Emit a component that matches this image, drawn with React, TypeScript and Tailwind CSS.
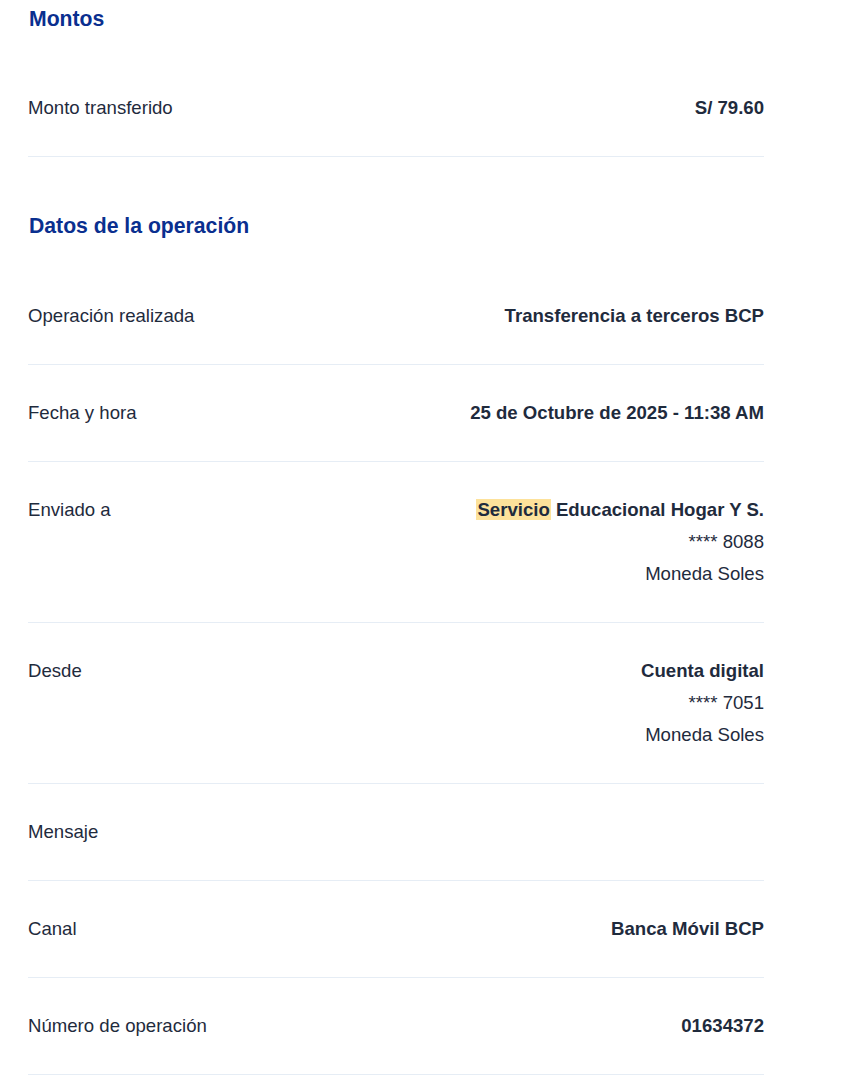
import React from "react";

type Row = { label: string; value?: React.ReactNode; extra?: string[] };

function RowItem({ label, value, extra }: Row) {
  return (
    <div className="flex justify-between border-b border-[#e6edf5] pt-[32px] pb-[32px] text-[18.6px] leading-[32px] text-[#1f2b3d]">
      <div>{label}</div>
      <div className="flex flex-col items-end">
        {value !== undefined && <div className="font-bold">{value}</div>}
        {extra?.map((e) => (
          <div key={e}>{e}</div>
        ))}
      </div>
    </div>
  );
}

export default function App() {
  return (
    <div
      className="bg-white w-[852px] min-h-[1092px] pl-[28px] pr-[88px]"
      style={{ fontFamily: '"Liberation Sans", Arial, sans-serif' }}
    >
      <div className="pt-[5px]">
        <h2 className="text-[21.2px] leading-[28px] font-bold text-[#0a2f8f] pl-[1px]">Montos</h2>
        <div className="mt-[27px]">
          <RowItem label="Monto transferido" value="S/ 79.60" />
        </div>
      </div>
      <div className="pt-[55px]">
        <h2 className="text-[21.2px] leading-[28px] font-bold text-[#0a2f8f] pl-[1px]">Datos de la operación</h2>
        <div className="mt-[28px]">
          <RowItem label="Operación realizada" value="Transferencia a terceros BCP" />
          <RowItem label="Fecha y hora" value="25 de Octubre de 2025 - 11:38 AM" />
          <RowItem
            label="Enviado a"
            value={
              <>
                <span className="bg-[#fde29b] px-[1px]">Servicio</span> Educacional Hogar Y S.
              </>
            }
            extra={["**** 8088", "Moneda Soles"]}
          />
          <RowItem label="Desde" value="Cuenta digital" extra={["**** 7051", "Moneda Soles"]} />
          <RowItem label="Mensaje" />
          <RowItem label="Canal" value="Banca Móvil BCP" />
          <RowItem label="Número de operación" value="01634372" />
        </div>
      </div>
    </div>
  );
}
